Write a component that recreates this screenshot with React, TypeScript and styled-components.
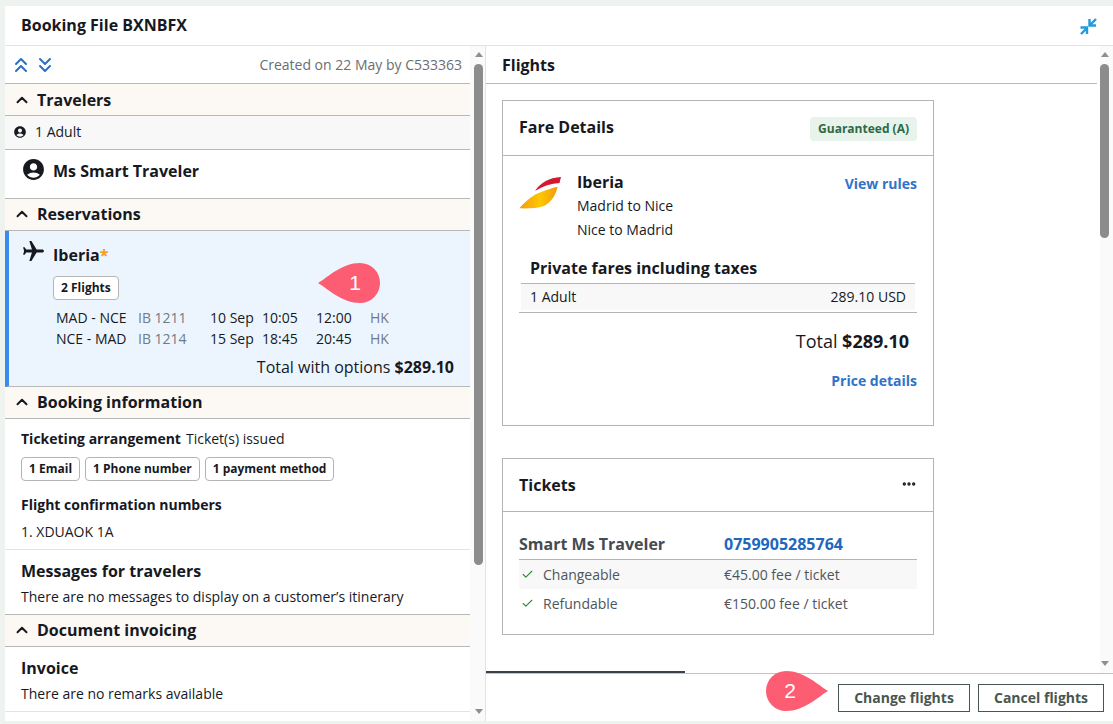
import React from "react";
import styled, { createGlobalStyle } from "styled-components";
import { ChevronsUp, ChevronsDown, ChevronUp, Check, Ellipsis } from "lucide-react";
import { MdAccountCircle, MdFlight } from "react-icons/md";

const Global = createGlobalStyle`
  html, body { margin: 0; padding: 0; }
  body { background: #eef3ef; font-family: "Open Sans", "Liberation Sans", sans-serif; color: #16191f; overflow: hidden; }
  * { box-sizing: border-box; }
`;

const Page = styled.div`
  position: relative;
  width: 1113px;
  height: 724px;
  padding: 6px 0 3px 5px;
`;
const Frame = styled.div`
  height: 715px;
  background: #fff;
  display: flex;
  flex-direction: column;
`;
const TopBar = styled.header`
  height: 40px;
  flex: none;
  display: flex;
  align-items: center;
  justify-content: space-between;
  padding: 0 16px 2px 16px;
  border-bottom: 1px solid #e3e3e3;
  font-size: 16px;
  font-weight: 700;
  svg { margin-top: 4px; }
`;
const Split = styled.div`
  flex: 1;
  min-height: 0;
  display: flex;
`;
const LeftPane = styled.div`
  width: 481px;
  flex: none;
  display: flex;
  border-right: 1px solid #e3e3e3;
`;
const RightPane = styled.div`
  flex: 1;
  min-width: 0;
  display: flex;
  flex-direction: column;
`;
const LeftContent = styled.div`
  width: 465px;
  flex: none;
  display: flex;
  flex-direction: column;
`;
const ScrollTrack = styled.div<{ $thumb: number; $w: number; $right: number }>`
  width: ${(p) => p.$w}px;
  flex: none;
  display: flex;
  flex-direction: column;
  align-items: flex-end;
  padding: 6px ${(p) => p.$right}px 0 0;
  background: #fafafa;
  i {
    display: block;
    width: 0;
    height: 0;
    border-left: 4.5px solid transparent;
    border-right: 4.5px solid transparent;
  }
  i:first-child { border-bottom: 5px solid #8f8f8f; margin-bottom: 7px; }
  i:last-child { border-top: 5px solid #8f8f8f; margin-top: auto; margin-bottom: 7px; }
  b {
    display: block;
    width: 9px;
    height: ${(p) => p.$thumb}px;
    border-radius: 5px;
    background: #8c8c8c;
  }
`;
const ToolRow = styled.div`
  height: 38px;
  flex: none;
  display: flex;
  align-items: center;
  justify-content: space-between;
  padding: 0 8px 0 4px;
  border-bottom: 1px solid #b8b8b8;
  font-size: 14px;
  color: #6a6e73;
`;
const IconPair = styled.div`
  display: flex;
  color: #2b6fc4;
`;
const SectionHead = styled.div<{ $low?: boolean }>`
  height: 32px;
  flex: none;
  display: flex;
  align-items: center;
  gap: 6px;
  padding: 0 0 ${(p) => (p.$low ? 0 : 2)}px 8px;
  background: #fcf8f3;
  border-bottom: 1px solid #b8b8b8;
  font-size: 16px;
  font-weight: 700;
`;
const AdultRow = styled.div`
  height: 34px;
  flex: none;
  display: flex;
  align-items: center;
  gap: 8px;
  padding: 0 0 2px 8px;
  background: #f8f8f8;
  border-bottom: 1px solid #b8b8b8;
  font-size: 14px;
`;
const TravelerRow = styled.div`
  height: 49px;
  flex: none;
  display: flex;
  align-items: flex-start;
  gap: 7px;
  padding: 7px 0 0 16px;
  border-bottom: 1px solid #b8b8b8;
  font-size: 16px;
  font-weight: 700;
  span { line-height: 28px; }
`;
const ResCard = styled.div`
  height: 156px;
  flex: none;
  background: #ecf5fd;
  border-left: 4px solid #3b8bef;
  border-bottom: 1px solid #b8b8b8;
  padding: 8px 16px 0 13px;
`;
const ResTitle = styled.div`
  display: flex;
  align-items: flex-start;
  gap: 7px;
  font-size: 16px;
  font-weight: 700;
  height: 36px;
  span { line-height: 32px; }
  em { font-style: normal; color: #f39a21; }
  svg { margin-left: -1px; transform: rotate(90deg); }
`;
const Chip = styled.span`
  display: inline-flex;
  align-items: center;
  height: 24px;
  padding: 0 7px 1px;
  background: #fff;
  border: 1px solid #b4b4b4;
  border-radius: 4px;
  font-size: 12px;
  font-weight: 700;
`;
const ResChipRow = styled.div`
  padding-left: 31px;
  height: 32px;
`;
const FlightGrid = styled.div`
  display: grid;
  grid-template-columns: 82px 72px 52px 54px 54px auto;
  grid-auto-rows: 21px;
  align-items: center;
  padding-left: 34px;
  font-size: 14px;
`;
const Muted = styled.span`
  color: #717a86;
`;
const ResTotal = styled.div`
  margin-top: 7px;
  text-align: right;
  font-size: 16px;
  b { font-weight: 700; }
`;
const InfoBlock = styled.div`
  height: 131px;
  flex: none;
  padding: 8px 16px 0;
  border-bottom: 1px solid #e3e3e3;
  font-size: 14px;
`;
const InfoLine = styled.div`
  height: 22px;
  display: flex;
  align-items: center;
  gap: 5px;
  b { font-weight: 700; }
`;
const ChipRow = styled.div`
  display: flex;
  gap: 5px;
  margin: 8px 0 13px;
`;
const InfoTitle = styled.div`
  font-weight: 700;
  height: 22px;
  line-height: 22px;
`;
const InfoValue = styled.div`
  margin-top: 5px;
  height: 22px;
  line-height: 22px;
`;
const Note = styled.div<{ $line: string }>`
  height: 65px;
  flex: none;
  padding: 9px 16px 0;
  font-size: 14px;
  line-height: 22px;
  border-bottom: 1px solid ${(p) => p.$line};
  h3 { margin: 0 0 3px; font-size: 16px; font-weight: 700; line-height: 24px; }
`;
const RightMain = styled.div`
  flex: 1;
  min-height: 0;
  display: flex;
`;
const RightContent = styled.div`
  flex: 1;
  min-width: 0;
  display: flex;
  flex-direction: column;
`;
const FlightsHead = styled.div`
  height: 38px;
  flex: none;
  display: flex;
  align-items: center;
  margin-right: 3px;
  padding-left: 16px;
  border-bottom: 1px solid #b8b8b8;
  font-size: 16px;
  font-weight: 700;
`;
const Card = styled.section<{ $h: number; $top: number }>`
  width: 432px;
  height: ${(p) => p.$h}px;
  margin: ${(p) => p.$top}px 0 0 16px;
  flex: none;
  border: 1px solid #b4b4b4;
  display: flex;
  flex-direction: column;
`;
const CardHead = styled.div<{ $h: number; $lift: number }>`
  height: ${(p) => p.$h}px;
  flex: none;
  display: flex;
  align-items: center;
  justify-content: space-between;
  padding: 0 16px;
  border-bottom: 1px solid #b4b4b4;
  font-size: 16px;
  font-weight: 700;
  h2 { margin: ${(p) => -p.$lift}px 0 0; font: inherit; }
`;
const Guaranteed = styled.span`
  height: 24px;
  display: inline-flex;
  align-items: center;
  padding: 0 8px 1px;
  border-radius: 4px;
  background: #e8f3ec;
  color: #2c6a45;
  font-size: 12px;
  font-weight: 700;
  margin-top: 2px;
`;
const AirlineRow = styled.div`
  display: flex;
  padding: 14px 16px 0;
  height: 101px;
  > svg { margin-top: 7px; }
`;
const AirlineText = styled.div`
  margin-left: 16px;
  flex: 1;
  font-size: 14px;
  line-height: 24px;
  h4 {
    margin: 0;
    font-size: 16px;
    font-weight: 700;
    line-height: 24px;
  }
`;
const LinkText = styled.span`
  color: #2f73c9;
  font-size: 14px;
  font-weight: 700;
`;
const RulesLink = styled(LinkText)`
  margin-top: 4px;
`;
const PrivateTitle = styled.div`
  padding-left: 27px;
  margin-top: -1px;
  height: 27px;
  font-size: 16px;
  font-weight: 700;
  line-height: 24px;
`;
const FareWrap = styled.div`
  margin: 0 16px;
  height: 30px;
  padding: 0 2px;
  border-bottom: 1px solid #b4b4b4;
`;
const FareRow = styled.div`
  height: 27px;
  display: flex;
  align-items: center;
  justify-content: space-between;
  padding: 0 9px 2px;
  background: #f8f8f8;
  border-top: 1px solid #b4b4b4;
  font-size: 14px;
`;
const FareTotal = styled.div`
  margin-top: 15px;
  padding-right: 24px;
  text-align: right;
  font-size: 18px;
  line-height: 26px;
  b { font-weight: 700; }
`;
const RightLink = styled.div`
  margin-top: 16px;
  padding-right: 16px;
  text-align: right;
  line-height: 20px;
`;
const TicketBody = styled.div`
  padding: 19px 16px 0;
`;
const TicketHead = styled.div`
  display: grid;
  grid-template-columns: 205px 1fr;
  height: 29px;
  padding-bottom: 3px;
  align-items: center;
  border-bottom: 1px solid #b4b4b4;
  font-size: 16px;
  font-weight: 700;
  color: #454b52;
  a { color: #2067bd; }
`;
const TicketRow = styled.div<{ $shade?: boolean }>`
  display: grid;
  grid-template-columns: 22px 181px 1fr;
  height: 29px;
  align-items: center;
  padding-left: 2px;
  background: ${(p) => (p.$shade ? "#f8f8f8" : "transparent")};
  font-size: 14px;
  color: #4f555c;
  svg { color: #2e8b3d; }
`;
const DotsIcon = styled(Ellipsis)`
  margin-top: -2px;
`;
const FooterTabLine = styled.div`
  height: 2px;
  flex: none;
  margin-top: -2px;
  width: 199px;
  background: #3a4148;
`;
const Footer = styled.footer`
  flex: none;
  height: 48px;
  border-top: 1px solid #c4c4c4;
  display: flex;
  justify-content: flex-end;
  align-items: flex-start;
  gap: 8px;
  padding: 10px 9px 0 0;
`;
const FootButton = styled.button<{ $w: number }>`
  width: ${(p) => p.$w}px;
  height: 28px;
  padding: 0 0 2px;
  background: #fff;
  border: 1px solid #47574f;
  color: #47574f;
  font-family: inherit;
  font-size: 14px;
  font-weight: 700;
`;
const Pin = styled.div<{ $x: number; $y: number; $flip?: boolean }>`
  position: absolute;
  left: ${(p) => p.$x}px;
  top: ${(p) => p.$y}px;
  width: 62px;
  height: 40px;
  svg { position: absolute; inset: 0; transform: ${(p) => (p.$flip ? "scaleX(-1)" : "none")}; }
  span {
    position: absolute;
    top: 0;
    left: ${(p) => (p.$flip ? 4 : 17)}px;
    width: 40px;
    height: 40px;
    display: flex;
    align-items: center;
    justify-content: center;
    color: #fff;
    font-family: "Liberation Sans", sans-serif;
    font-size: 21px;
  }
`;

const Teardrop = () => (
  <svg width="62" height="40" viewBox="0 0 62 40">
    <path d="M0 20 C10 14 24 0 42 0 A20 20 0 0 1 42 40 C24 40 10 26 0 20 Z" fill="#fc5d72" />
  </svg>
);

const CompressIcon = () => (
  <svg width="17" height="17" viewBox="0 0 17 17" fill="none" stroke="#1e9be0" strokeWidth="2.4">
    <path d="M9.5 1V7.5H16" />
    <path d="M10 7L16 1" />
    <path d="M0.5 9.5H7V16" />
    <path d="M7 10L1 16" />
  </svg>
);

const IberiaLogo = () => (
  <svg width="42" height="33" viewBox="0 0 42 33" style={{ flex: "none" }}>
    <defs>
      <linearGradient id="ib" x1="0" x2="1" y1="0" y2="0">
        <stop offset="0" stopColor="#f39a0c" />
        <stop offset="0.55" stopColor="#fdc800" />
        <stop offset="1" stopColor="#f39a0c" />
      </linearGradient>
    </defs>
    <path d="M42 0 C30 1 22 5 16 14 C24 9 32 6.5 40.5 6 Z" fill="#d3192f" />
    <path d="M0.3 31.3 C8 23 14 18 21 15.5 C27 13 33 11 38.6 9.7 C37 17 33 25 25 29 C18 31.5 8 31.5 0.3 31.3 Z" fill="url(#ib)" />
  </svg>
);

const Section = ({ title, low }: { title: string; low?: boolean }) => (
  <SectionHead $low={low}>
    <ChevronUp size={18} strokeWidth={2.6} color="#16191f" />
    {title}
  </SectionHead>
);

export default function App() {
  return (
    <Page>
      <Global />
      <Frame>
        <TopBar>
          Booking File BXNBFX
          <CompressIcon />
        </TopBar>
        <Split>
          <LeftPane>
            <LeftContent>
              <ToolRow>
                <IconPair>
                  <ChevronsUp size={24} strokeWidth={2} />
                  <ChevronsDown size={24} strokeWidth={2} />
                </IconPair>
                Created on 22 May by C533363
              </ToolRow>
              <Section title="Travelers" low />
              <AdultRow>
                <MdAccountCircle size={14} />1 Adult
              </AdultRow>
              <TravelerRow>
                <MdAccountCircle size={25} />
                <span>Ms Smart Traveler</span>
              </TravelerRow>
              <Section title="Reservations" />
              <ResCard>
                <ResTitle>
                  <MdFlight size={25} />
                  <span>
                    Iberia<em>*</em>
                  </span>
                </ResTitle>
                <ResChipRow>
                  <Chip>2 Flights</Chip>
                </ResChipRow>
                <FlightGrid>
                  <span>MAD - NCE</span><Muted>IB 1211</Muted><span>10 Sep</span><span>10:05</span><span>12:00</span><Muted>HK</Muted>
                  <span>NCE - MAD</span><Muted>IB 1214</Muted><span>15 Sep</span><span>18:45</span><span>20:45</span><Muted>HK</Muted>
                </FlightGrid>
                <ResTotal>
                  Total with options <b>$289.10</b>
                </ResTotal>
              </ResCard>
              <Section title="Booking information" />
              <InfoBlock>
                <InfoLine>
                  <b>Ticketing arrangement</b> Ticket(s) issued
                </InfoLine>
                <ChipRow>
                  <Chip>1 Email</Chip>
                  <Chip>1 Phone number</Chip>
                  <Chip>1 payment method</Chip>
                </ChipRow>
                <InfoTitle>Flight confirmation numbers</InfoTitle>
                <InfoValue>1. XDUAOK 1A</InfoValue>
              </InfoBlock>
              <Note $line="#b8b8b8">
                <h3>Messages for travelers</h3>
                There are no messages to display on a customer’s itinerary
              </Note>
              <Section title="Document invoicing" />
              <Note $line="#e3e3e3">
                <h3>Invoice</h3>
                There are no remarks available
              </Note>
            </LeftContent>
            <ScrollTrack $thumb={501} $w={15} $right={2}>
              <i />
              <b />
              <i />
            </ScrollTrack>
          </LeftPane>
          <RightPane>
            <RightMain>
              <RightContent>
                <FlightsHead>Flights</FlightsHead>
                <Card $h={326} $top={16}>
                  <CardHead $h={55} $lift={3}>
                    <h2>Fare Details</h2>
                    <Guaranteed>Guaranteed (A)</Guaranteed>
                  </CardHead>
                  <AirlineRow>
                    <IberiaLogo />
                    <AirlineText>
                      <h4>Iberia</h4>
                      Madrid to Nice
                      <br />
                      Nice to Madrid
                    </AirlineText>
                    <RulesLink>View rules</RulesLink>
                  </AirlineRow>
                  <PrivateTitle>Private fares including taxes</PrivateTitle>
                  <FareWrap>
                    <FareRow>
                      <span>1 Adult</span>
                      <span>289.10 USD</span>
                    </FareRow>
                  </FareWrap>
                  <FareTotal>
                    Total <b>$289.10</b>
                  </FareTotal>
                  <RightLink>
                    <LinkText>Price details</LinkText>
                  </RightLink>
                </Card>
                <Card $h={177} $top={32}>
                  <CardHead $h={53} $lift={1}>
                    <h2>Tickets</h2>
                    <DotsIcon size={16} strokeWidth={3} />
                  </CardHead>
                  <TicketBody>
                    <TicketHead>
                      <span>Smart Ms Traveler</span>
                      <a>0759905285764</a>
                    </TicketHead>
                    <TicketRow $shade>
                      <Check size={13} strokeWidth={2} />
                      <span>Changeable</span>
                      <span>€45.00 fee / ticket</span>
                    </TicketRow>
                    <TicketRow>
                      <Check size={13} strokeWidth={2} />
                      <span>Refundable</span>
                      <span>€150.00 fee / ticket</span>
                    </TicketRow>
                  </TicketBody>
                </Card>
              </RightContent>
              <ScrollTrack $thumb={174} $w={13} $right={4}>
                <i />
                <b />
                <i />
              </ScrollTrack>
            </RightMain>
            <FooterTabLine />
            <Footer>
              <FootButton $w={132}>Change flights</FootButton>
              <FootButton $w={126}>Cancel flights</FootButton>
            </Footer>
          </RightPane>
        </Split>
      </Frame>
      <Pin $x={318} $y={263}>
        <Teardrop />
        <span>1</span>
      </Pin>
      <Pin $x={766} $y={671} $flip>
        <Teardrop />
        <span>2</span>
      </Pin>
    </Page>
  );
}
